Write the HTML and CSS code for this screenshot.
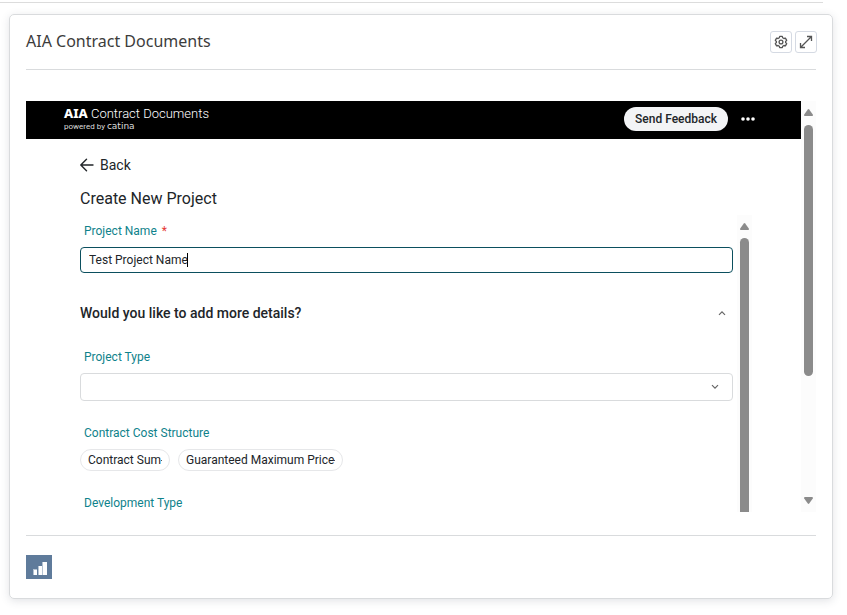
FILE: index.html
```html
<!DOCTYPE html>
<html lang="en">
<head>
<meta charset="UTF-8">
<meta name="viewport" content="width=device-width, initial-scale=1.0">
<title>AIA Contract Documents</title>
<link rel="stylesheet" href="styles.css">
</head>
<body>

<div class="page-rule"></div>

<section class="card">
  <header class="card-header">
    <h1>AIA Contract Documents</h1>
    <div class="card-tools">
      <button type="button" class="tool-button" aria-label="Settings">
        <svg width="14" height="14" viewBox="0 0 14 14" fill="none" stroke="#555" stroke-width="1.3" stroke-linejoin="round">
          <path d="M5.700 1.300h2.600l.4 1.500 1.200.7 1.500-.4 1.300 2.300-1.100 1.100v1l1.100 1.100-1.300 2.300-1.500-.4-1.200.7-.4 1.500H5.700l-.4-1.500-1.200-.7-1.500.4-1.300-2.300 1.100-1.100v-1L1.300 5.400l1.300-2.300 1.500.4 1.200-.7z"/>
          <circle cx="7" cy="7" r="1.900"/>
        </svg>
      </button>
      <button type="button" class="tool-button" aria-label="Expand">
        <svg width="14" height="14" viewBox="0 0 14 14" fill="none" stroke="#555" stroke-width="1.300">
          <path d="M1.500 12.500l11-11M8 1.500h4.500V6M1.500 8v4.500H6"/>
        </svg>
      </button>
    </div>
  </header>

  <div class="frame">
    <div class="app">
      <!-- App bar -->
      <div class="app-bar">
        <div class="brand">
          <div class="brand-name"><b>AIA</b> Contract Documents</div>
          <div class="brand-by">powered by <span class="brand-catina">catina</span></div>
        </div>
        <button type="button" class="feedback-button">Send Feedback</button>
        <button type="button" class="more-button" aria-label="More">
          <svg width="14" height="4" viewBox="0 0 14 4" fill="#fff">
            <circle cx="2" cy="2" r="1.800"/><circle cx="7" cy="2" r="1.800"/><circle cx="12" cy="2" r="1.800"/>
          </svg>
        </button>
      </div>

      <div class="app-body">
        <a href="#" class="back-link">
          <svg width="14" height="14" viewBox="0 0 14 14" fill="none" stroke="#212529" stroke-width="1.400" stroke-linecap="round" stroke-linejoin="round">
            <path d="M13 7H1M6.500 1.300L.8 7l5.700 5.700"/>
          </svg>
          Back
        </a>
        <h2>Create New Project</h2>

        <div class="form-scroll">
          <form class="project-form">
            <label for="projectName">Project Name <span class="required">*</span></label>
            <div class="text-field">
              <input type="text" id="projectName" value="Test Project Name">
              <span class="caret"></span>
            </div>

            <button type="button" class="details-toggle">
              Would you like to add more details?
              <svg width="8" height="6" viewBox="0 0 8 6" fill="none" stroke="#666" stroke-width="1.200">
                <path d="M1 4.800l3-3 3 3"/>
              </svg>
            </button>

            <label for="projectType">Project Type</label>
            <select id="projectType" class="select-field">
              <option value=""></option>
            </select>

            <div class="field-label">Contract Cost Structure</div>
            <div class="chips">
              <button type="button" class="chip">Contract Sum</button>
              <button type="button" class="chip">Guaranteed Maximum Price</button>
            </div>

            <div class="field-label">Development Type</div>
          </form>
          <div class="scrollbar">
            <svg class="scroll-arrow" width="9" height="7" viewBox="0 0 9 7" fill="#8b8b8b"><path d="M3.800.4Q4.500-.3 5.200.4L8.800 5.500Q9.200 7 8 7H1Q-.2 7 .2 5.500z"/></svg>
            <div class="thumb thumb-cut"></div>
          </div>
        </div>
      </div>
    </div>

    <div class="scrollbar">
      <svg class="scroll-arrow" width="9" height="7" viewBox="0 0 9 7" fill="#8b8b8b"><path d="M3.800.4Q4.500-.3 5.200.4L8.800 5.500Q9.200 7 8 7H1Q-.2 7 .2 5.500z"/></svg>
      <div class="track">
        <div class="thumb thumb-part"></div>
      </div>
      <svg class="scroll-arrow" width="9" height="7" viewBox="0 0 9 7" fill="#8b8b8b"><path d="M3.800 6.600Q4.500 7.300 5.200 6.600L8.800 1.500Q9.200 0 8 0H1Q-.2 0 .2 1.500z"/></svg>
    </div>
  </div>

  <footer class="card-footer">
    <button type="button" class="chart-button" aria-label="Chart">
      <svg width="14" height="13" viewBox="0 0 14 13">
        <path fill="#b5c3d2" d="M0 7h4v6H0zM5 4h4v9H5zM9 0h1v13H9z"/>
        <path fill="#fff" d="M1 8h3v5H1zM6 4h3v9H6zM10 0h4v13h-4z"/>
      </svg>
    </button>
  </footer>
</section>

</body>
</html>
```

FILE: styles.css
```css
* {
  box-sizing: border-box;
}

body {
  margin: 0;
  padding: 2px 0 16px;
  background: #fff;
  color: #212529;
  font-family: Roboto, "Liberation Sans", sans-serif;
  font-size: 12px;
}

button, input, select {
  font: inherit;
  color: inherit;
}

button {
  padding: 0;
  border: none;
  background: none;
}

.page-rule {
  height: 1px;
  margin-right: 24px;
  background: #dcdcdc;
}

.card {
  margin: 11px 14px 0 9px;
  padding: 0 16px;
  border: 1px solid #d9dbdd;
  border-radius: 5px;
  box-shadow: 0 2px 8px rgba(60,70,90,0.15);
}

.card-header {
  display: flex;
  align-items: center;
  justify-content: space-between;
  height: 55px;
  border-bottom: 1px solid #d9dbdd;
}

h1 {
  margin: 0;
  padding-bottom: 2px;
  font-family: "Noto Sans", sans-serif;
  font-size: 16px;
  font-weight: 400;
  color: #3c3c3c;
}

.card-tools {
  display: flex;
  gap: 3px;
  margin-right: -1px;
}

.tool-button {
  display: flex;
  align-items: center;
  justify-content: center;
  width: 22px;
  height: 22px;
  border: 1px solid #d5dae3;
  border-radius: 3px;
}

.frame {
  display: flex;
  margin-top: 31px;
}

.app {
  flex: 1;
}

.app-bar {
  display: flex;
  align-items: center;
  height: 38px;
  padding: 0 46px 2px 38px;
  background: #000;
}

.brand {
  flex: 1;
  color: #fff;
}

.brand-name {
  font-size: 13px;
  font-weight: 300;
  line-height: 14px;
}

.brand-name b {
  font-family: "Noto Sans", sans-serif;
  font-weight: 800;
}

.brand-by {
  font-size: 8px;
  line-height: 11px;
  color: #ddd;
}

.brand-catina {
  font-family: "DejaVu Sans", sans-serif;
  font-size: 9px;
}

.feedback-button {
  height: 24px;
  padding: 0 11px;
  border-radius: 12px;
  background: #f3f4f6;
  font-weight: 500;
}

.more-button {
  display: flex;
  margin-left: 13px;
}

.app-body {
  padding: 17px 49px 0 54px;
}

.back-link {
  display: flex;
  align-items: center;
  gap: 6px;
  font-size: 14px;
  line-height: 18px;
  color: #212529;
  text-decoration: none;
}

h2 {
  margin: 15px 0 6px;
  font-size: 16px;
  font-weight: 400;
  line-height: 20px;
}

.form-scroll {
  display: flex;
  gap: 4px;
}

.project-form {
  display: flex;
  flex: 1;
  flex-direction: column;
  padding-top: 8px;
}

label, .field-label {
  padding-left: 4px;
  font-weight: 400;
  line-height: 16px;
  color: #0f828b;
}

.required {
  margin-left: 2px;
  color: #e53935;
}

.text-field {
  position: relative;
  margin-top: 8px;
}

.text-field input {
  display: block;
  width: 100%;
  height: 26px;
  padding: 0 8px;
  border: 1px solid #0b4f5e;
  border-radius: 4px;
  background: #fff;
}

/* text cursor */
.caret {
  position: absolute;
  top: 6px;
  left: 107px;
  width: 1px;
  height: 14px;
  background: #000;
}

.details-toggle {
  display: flex;
  align-items: center;
  justify-content: space-between;
  margin: 30px 0 26px;
  padding-right: 7px;
  font-size: 14px;
  font-weight: 500;
  line-height: 20px;
}

.select-field {
  height: 28px;
  margin: 8px 0 24px;
  padding: 0 8px;
  border: 1px solid #d9dbdd;
  border-radius: 4px;
  appearance: none;
  background: #fff url("data:image/svg+xml,%3Csvg xmlns='http://www.w3.org/2000/svg' width='8' height='6' fill='none' stroke='%23666' stroke-width='1.200'%3E%3Cpath d='M1 1.200l3 3 3-3'/%3E%3C/svg%3E") no-repeat right 13px center;
}

.chips {
  display: flex;
  gap: 8px;
  margin: 8px 0 24px;
}

.chip {
  display: flex;
  align-items: center;
  height: 22px;
  padding: 0 7px;
  border: 1px solid #e6e7e9;
  border-radius: 11px;
}

.chip::after {
  content: "";
  width: 1px;
  height: 1px;
  background: #555;
}

.scrollbar {
  display: flex;
  flex-direction: column;
  align-items: center;
  width: 15px;
  padding-top: 8px;
  background: #fcfcfc;
}

.scroll-arrow {
  flex: none;
}

.thumb {
  width: 9px;
  border-radius: 5px;
  background: #8b8b8b;
}

.thumb-cut {
  flex: 1;
  margin-top: 8px;
  border-radius: 5px 5px 0 0;
}

.track {
  flex: 1;
  margin: 9px 0 8px;
}

.thumb-part {
  height: 69%;
}

.frame > .scrollbar {
  padding-bottom: 8px;
}

.app-body .field-label:last-child {
  padding-bottom: 1px;
}

.card-footer {
  margin-top: 23px;
  padding: 19px 0;
  border-top: 1px solid #d9dbdd;
}

.chart-button {
  display: flex;
  align-items: center;
  justify-content: center;
  width: 26px;
  height: 24px;
  padding: 2px 0 0 2px;
  background: #5f7b9b;
}
```
